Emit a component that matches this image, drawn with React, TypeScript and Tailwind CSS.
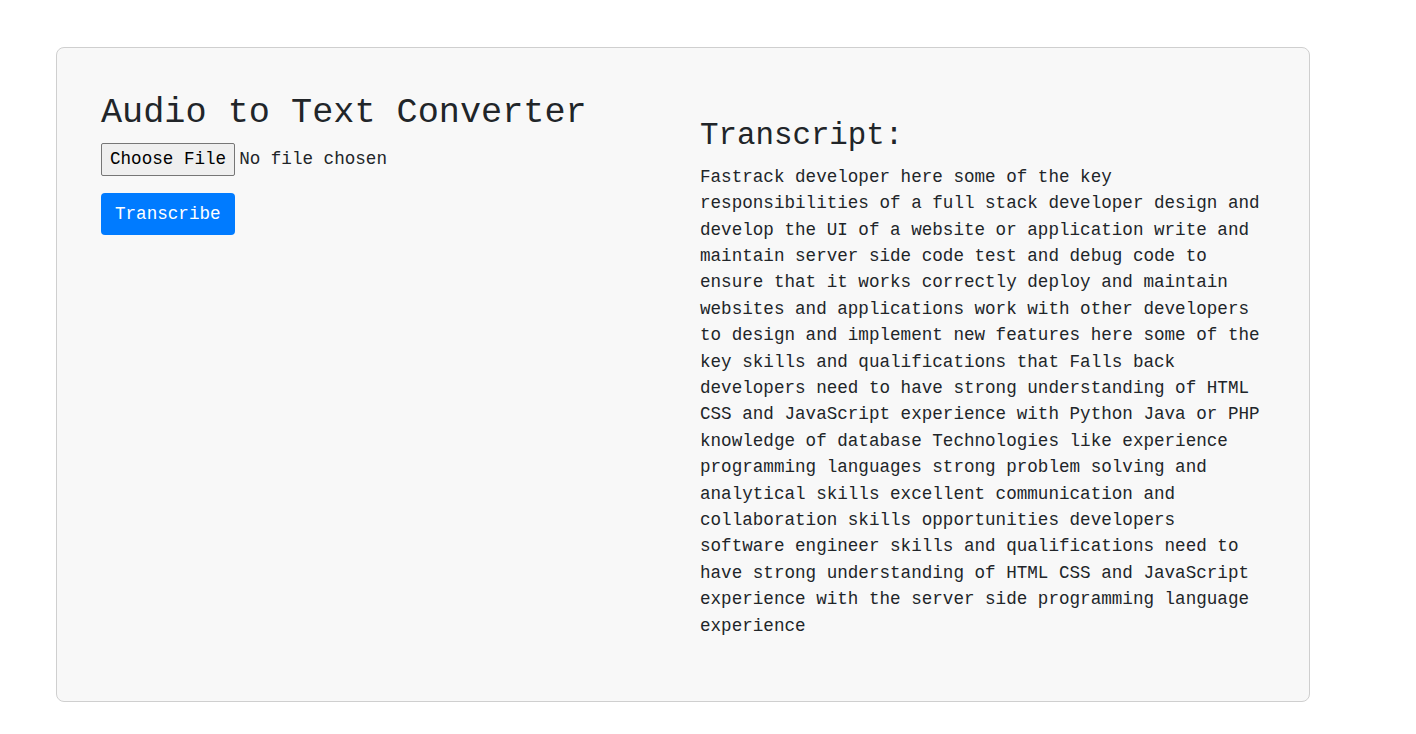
import React from "react";

const transcript =
  "Fastrack developer here some of the key responsibilities of a full stack developer design and develop the UI of a website or application write and maintain server side code test and debug code to ensure that it works correctly deploy and maintain websites and applications work with other developers to design and implement new features here some of the key skills and qualifications that Falls back developers need to have strong understanding of HTML CSS and JavaScript experience with Python Java or PHP knowledge of database Technologies like experience programming languages strong problem solving and analytical skills excellent communication and collaboration skills opportunities developers software engineer skills and qualifications need to have strong understanding of HTML CSS and JavaScript experience with the server side programming language experience";

export default function App() {
  return (
    <div
      className="min-h-[734px] w-[1416px] bg-white pt-[47px] pl-[56px] text-[#212529]"
      style={{ fontFamily: '"Liberation Mono", "Courier New", monospace' }}
    >
      <div className="w-[1254px] rounded-[8px] border border-[#cfcfcf] bg-[#f8f8f8] p-[44px]">
        <div className="grid grid-cols-2 gap-x-[34px]">
          <div className="flex flex-col items-start">
            <h1 className="m-0 pt-[1.5px] text-[35.2px] leading-[39.9px] font-normal">
              Audio to Text Converter
            </h1>
            <div className="mt-[9.5px] flex items-center text-[17.6px] leading-[20px]">
              <button className="flex h-[33px] items-center rounded-[2px] border border-[#767676] bg-[#efefef] px-[8px] text-black">
                Choose File
              </button>
              <span className="ml-[4px]">No file chosen</span>
            </div>
            <button className="mt-[17px] h-[42px] rounded-[4px] bg-[#007bff] px-[14px] text-[17.6px] leading-[26.4px] text-white">
              Transcribe
            </button>
          </div>
          <div className="pt-[26.9px]">
            <h2 className="m-0 text-[30.8px] leading-[34.9px] font-normal">Transcript:</h2>
            <p className="mt-[10px] mb-[17.6px] text-[17.6px] leading-[26.4px]">{transcript}</p>
          </div>
        </div>
      </div>
    </div>
  );
}
